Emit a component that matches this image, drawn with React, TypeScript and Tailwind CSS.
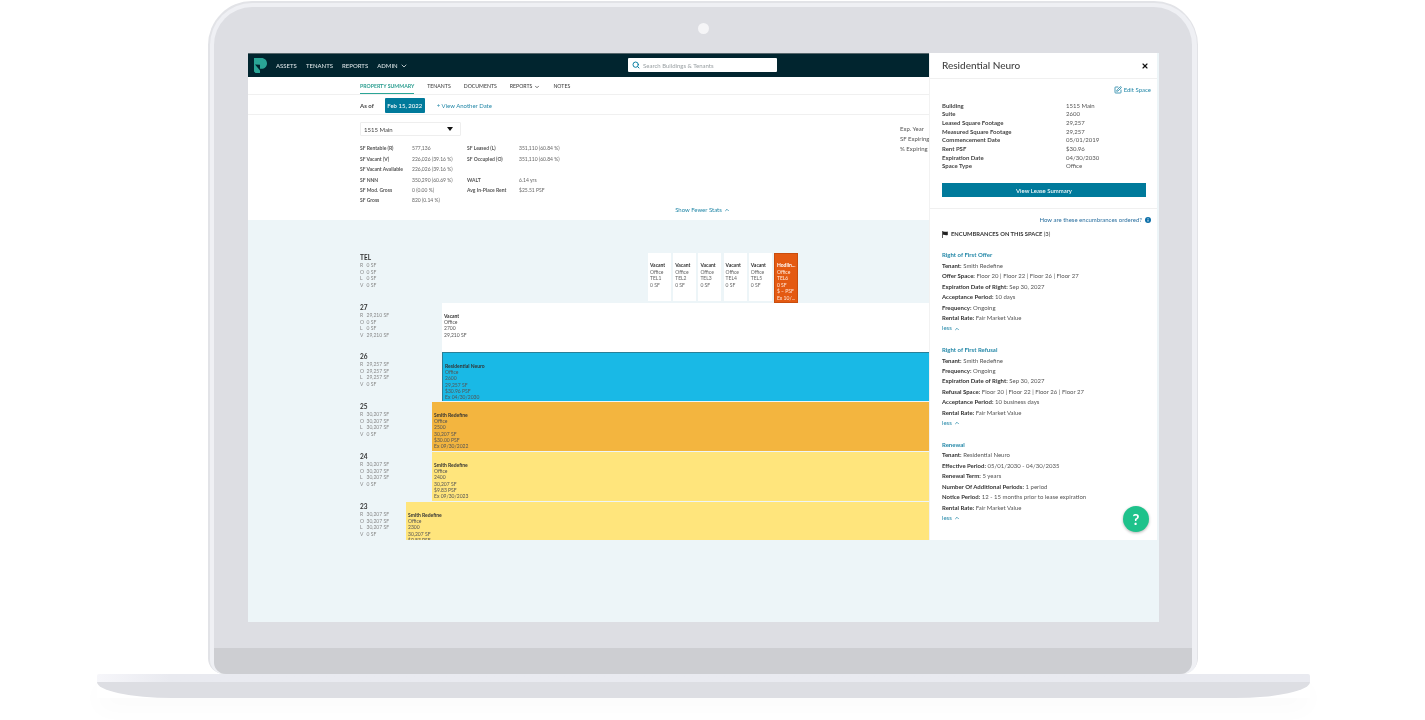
import React from "react";
import { ChevronDown, ChevronUp, Search, X, SquarePen } from "lucide-react";

const stats = [
  ["SF Rentable (R)", "577,136", "SF Leased (L)", "351,110 (60.84 %)"],
  ["SF Vacant (V)", "226,026 (39.16 %)", "SF Occupied (O)", "351,110 (60.84 %)"],
  ["SF Vacant Available", "226,026 (39.16 %)", "", ""],
  ["SF NNN", "350,290 (60.69 %)", "WALT", "6.14 yrs"],
  ["SF Mod. Gross", "0 (0.00 %)", "Avg In-Place Rent", "$25.51 PSF"],
  ["SF Gross", "820 (0.14 %)", "", ""],
];

const details = [
  ["Building", "1515 Main"],
  ["Suite", "2600"],
  ["Leased Square Footage", "29,257"],
  ["Measured Square Footage", "29,257"],
  ["Commencement Date", "05/01/2019"],
  ["Rent PSF", "$30.96"],
  ["Expiration Date", "04/30/2030"],
  ["Space Type", "Office"],
];

const encumbrances = [
  {
    title: "Right of First Offer",
    rows: [
      ["Tenant:", "Smith Redefine"],
      ["Offer Space:", "Floor 20 | Floor 22 | Floor 26 | Floor 27"],
      ["Expiration Date of Right:", "Sep 30, 2027"],
      ["Acceptance Period:", "10 days"],
      ["Frequency:", "Ongoing"],
      ["Rental Rate:", "Fair Market Value"],
    ],
  },
  {
    title: "Right of First Refusal",
    rows: [
      ["Tenant:", "Smith Redefine"],
      ["Frequency:", "Ongoing"],
      ["Expiration Date of Right:", "Sep 30, 2027"],
      ["Refusal Space:", "Floor 20 | Floor 22 | Floor 26 | Floor 27"],
      ["Acceptance Period:", "10 business days"],
      ["Rental Rate:", "Fair Market Value"],
    ],
  },
  {
    title: "Renewal",
    rows: [
      ["Tenant:", "Residential Neuro"],
      ["Effective Period:", "05/01/2030 - 04/30/2035"],
      ["Renewal Term:", "5 years"],
      ["Number Of Additional Periods:", "1 period"],
      ["Notice Period:", "12 - 15 months prior to lease expiration"],
      ["Rental Rate:", "Fair Market Value"],
    ],
  },
];

const telBoxes = ["TEL1", "TEL2", "TEL3", "TEL4", "TEL5"];

const floors = [
  {
    name: "27",
    sf: ["29,210 SF", "0 SF", "0 SF", "29,210 SF"],
    labelW: "w-[194px]",
    block: "bg-white",
    h: "h-[49px]",
    title: "Vacant",
    lines: ["Office", "2700", "29,210 SF"],
  },
  {
    name: "26",
    sf: ["29,257 SF", "29,257 SF", "29,257 SF", "0 SF"],
    labelW: "w-[194px]",
    block: "bg-[#19b9e6] border-t border-l border-[#2a7f97]",
    h: "h-[50px]",
    title: "Residential Neuro",
    lines: ["Office", "2600", "29,257 SF", "$30.96 PSF", "Ex 04/30/2030"],
  },
  {
    name: "25",
    sf: ["30,207 SF", "30,207 SF", "30,207 SF", "0 SF"],
    labelW: "w-[184px]",
    block: "bg-[#f3b53f]",
    h: "h-[50px]",
    title: "Smith Redefine",
    lines: ["Office", "2500", "30,207 SF", "$30.00 PSF", "Ex 09/30/2022"],
  },
  {
    name: "24",
    sf: ["30,207 SF", "30,207 SF", "30,207 SF", "0 SF"],
    labelW: "w-[184px]",
    block: "bg-[#ffe57c]",
    h: "h-[50px]",
    title: "Smith Redefine",
    lines: ["Office", "2400", "30,207 SF", "$9.83 PSF", "Ex 09/30/2023"],
  },
  {
    name: "23",
    sf: ["30,207 SF", "30,207 SF", "30,207 SF", "0 SF"],
    labelW: "w-[158px]",
    block: "bg-[#ffe57c]",
    h: "h-[50px]",
    title: "Smith Redefine",
    lines: ["Office", "2300", "30,207 SF", "$9.83 PSF"],
  },
];

const Logo = () => (
  <svg width="13" height="15" viewBox="0 0 13 15">
    <path d="M0 0H7.5C10.6 0 13 2.4 13 5.4C13 8.4 10.6 10.8 7.5 10.8H6V15H1.5L0 13.5Z" fill="#2aa596" />
    <path d="M1 6.5L6 6.8V12.6Z" fill="#01252f" />
  </svg>
);

const FlagIcon = () => (
  <svg width="6" height="7" viewBox="0 0 6 7">
    <path d="M0.4 0V7" stroke="#222" strokeWidth="0.8" />
    <path d="M0.8 0.6C2.2 0 3.2 1.2 5.8 0.6V4C3.2 4.6 2.2 3.4 0.8 4Z" fill="#222" />
  </svg>
);

const InfoDot = () => (
  <svg width="6" height="6" viewBox="0 0 6 6">
    <circle cx="3" cy="3" r="3" fill="#0a6ea8" />
    <path d="M3 2.6V4.6M3 1.2V1.9" stroke="#fff" strokeWidth="0.9" />
  </svg>
);

const FloorLabel = ({ name, sf }: { name: string; sf: string[] }) => (
  <div className="pl-[112px]">
    <div className="text-[6.5px] leading-[7px] font-bold text-[#333] pt-[1px]">{name}</div>
    <div className="mt-[1px] text-[5px] leading-[6.7px] text-[#888]">
      {["R", "O", "L", "V"].map((k, i) => (
        <div key={k} className="flex">
          <span className="w-[6.5px]">{k}</span>
          <span>{sf[i]}</span>
        </div>
      ))}
    </div>
  </div>
);

function MainColumn() {
  return (
    <div className="w-[681px] flex flex-col">
      {/* top nav */}
      <div className="h-[24px] shrink-0 bg-[#01252f] border-t border-[#55666c] flex items-center pl-[6px] relative">
        <Logo />
        <div className="ml-[9px] flex items-center gap-[9px] text-[6px] font-medium text-[#d8e0e3]">
          <span>ASSETS</span>
          <span>TENANTS</span>
          <span>REPORTS</span>
          <span className="flex items-center gap-[2px]">
            ADMIN <ChevronDown size={8} strokeWidth={2.5} />
          </span>
        </div>
        <div className="absolute left-[380px] top-[4px] w-[149px] h-[14px] bg-white flex items-center pl-[4px] gap-[3px] rounded-[1px]">
          <Search size={8} strokeWidth={3} className="text-[#0a7fa3]" />
          <span className="text-[6px] text-[#9aa0a3]">Search Buildings &amp; Tenants</span>
        </div>
      </div>

      {/* tabs */}
      <div className="h-[18px] shrink-0 bg-white border-b border-[#f0f0f0] pl-[112px] flex items-stretch gap-[13px] text-[5.2px] font-medium text-[#444]">
        <span className="flex items-center pt-[3px] border-b border-[#2aa596] text-[#2a9d8f] font-bold">PROPERTY SUMMARY</span>
        <span className="flex items-center pt-[3px]">TENANTS</span>
        <span className="flex items-center pt-[3px]">DOCUMENTS</span>
        <span className="flex items-center pt-[3px] gap-[2px]">
          REPORTS <ChevronDown size={6} strokeWidth={3} />
        </span>
        <span className="flex items-center pt-[3px]">NOTES</span>
      </div>

      {/* as of */}
      <div className="h-[20px] shrink-0 bg-white border-b border-[#f0f0f0] pl-[112px] pt-[1px] flex items-center text-[6px]">
        <span className="font-bold text-[#444]">As of</span>
        <span className="ml-[11px] h-[15px] w-[40px] flex items-center justify-center bg-[#007a9b] rounded-[1px] text-white font-medium">
          Feb 15, 2022
        </span>
        <span className="ml-[12px] text-[#2488a8]">+ View Another Date</span>
      </div>

      {/* stats */}
      <div className="h-[105px] shrink-0 bg-white flex flex-col">
        <div className="h-[90px] flex justify-between pl-[112px] pt-[7px] overflow-hidden">
          <div>
            <div className="w-[101px] h-[14px] bg-white border border-[#eeeeee] rounded-[1px] flex items-center justify-between px-[3px]">
              <span className="text-[6px] text-[#444]">1515 Main</span>
              <svg width="6" height="4" viewBox="0 0 6 4" className="mr-[4px]">
                <path d="M0 0H6L3 4Z" fill="#111" />
              </svg>
            </div>
            <div className="mt-[8px] grid grid-cols-[52px_55px_52px_60px] auto-rows-[10.4px] items-center text-[5px] text-[#666]">
              {stats.map((r) =>
                r.map((c, i) => (
                  <span key={r[0] + i} className={i % 2 === 0 ? "font-bold text-[#555] whitespace-nowrap" : "whitespace-nowrap"}>
                    {c}
                  </span>
                ))
              )}
            </div>
          </div>
          <div className="w-[29px] pt-[2px] text-[6px] leading-[10.2px] text-[#555] whitespace-nowrap overflow-hidden">
            <div>Exp. Year</div>
            <div>SF Expiring</div>
            <div>% Expiring</div>
          </div>
        </div>
        <div className="h-[15px] flex items-start justify-center pl-[228px] text-[6px] text-[#2488a8]">
          <span className="flex items-center gap-[2px]">
            Show Fewer Stats <ChevronUp size={6} strokeWidth={3} />
          </span>
        </div>
      </div>

      {/* stacking plan */}
      <div className="flex-1 overflow-hidden bg-[#edf5f8]">
        <div className="h-[83px] flex">
          <div className="w-[400px] pt-[33px]">
            <FloorLabel name="TEL" sf={["0 SF", "0 SF", "0 SF", "0 SF"]} />
          </div>
          <div className="pt-[33px] flex gap-[2.2px]">
            {telBoxes.map((t) => (
              <div key={t} className="w-[23px] h-[48px] bg-white pl-[2px] pt-[9px] text-[5px] leading-[6.6px] text-[#666]">
                <div className="font-bold text-[#333]">Vacant</div>
                <div>Office</div>
                <div>{t}</div>
                <div>0 SF</div>
              </div>
            ))}
            <div className="w-[24px] h-[50px] bg-[#e45a12] border border-[#c94d0d] pl-[2px] pt-[8px] text-[5px] leading-[6.6px] text-[#ffe9dc] overflow-hidden">
              <div className="font-bold text-white">Hodlin...</div>
              <div>Office</div>
              <div>TEL6</div>
              <div>0 SF</div>
              <div>$ – PSF</div>
              <div>Ex 10/...</div>
            </div>
          </div>
        </div>
        {floors.map((f) => (
          <div key={f.name} className={`${f.h} flex`}>
            <div className={`${f.labelW} shrink-0`}>
              <FloorLabel name={f.name} sf={f.sf} />
            </div>
            <div className={`flex-1 h-[49px] ${f.block} pl-[2px] pt-[10px] text-[5px] leading-[6.2px] text-[#555]`}>
              <div className="font-bold text-[#333]">{f.title}</div>
              {f.lines.map((l) => (
                <div key={l}>{l}</div>
              ))}
            </div>
          </div>
        ))}
      </div>
    </div>
  );
}

function SidePanel() {
  return (
    <div className="w-[228px] bg-white relative text-[6px] text-[#555] overflow-hidden border-l border-[#f2f2f2]">
      <div className="h-[26px] border-b border-[#f0f0f0] flex items-center justify-between pl-[12px] pr-[8px]">
        <span className="text-[10px] font-medium text-[#444]">Residential Neuro</span>
        <X size={8} strokeWidth={3.5} className="text-[#111]" />
      </div>
      <div className="pr-[6px] h-[20px] pt-[1px] flex items-center justify-end gap-[2px] text-[#2488a8]">
        <SquarePen size={8} strokeWidth={2.5} />
        <span>Edit Space</span>
      </div>
      <div className="pl-[12px] mt-[2px] grid grid-cols-[124px_1fr] auto-rows-[8.66px] items-center">
        {details.map(([k, v]) => (
          <React.Fragment key={k}>
            <span className="font-bold text-[#444]">{k}</span>
            <span>{v}</span>
          </React.Fragment>
        ))}
      </div>
      <div className="mx-[12px] mt-[13px] w-[204px] h-[14px] bg-[#007a9b] text-white font-medium flex items-center justify-center">
        View Lease Summary
      </div>
      <div className="mt-[11px] border-t border-[#f0f0f0] h-[22px] pr-[6px] flex items-center justify-end gap-[3px] text-[#2a6f9f]">
        How are these encumbrances ordered?
        <InfoDot />
      </div>
      <div className="pl-[12px] flex items-center gap-[3px] h-[9px] font-bold text-[#333] text-[5.8px]">
        <FlagIcon />
        <span>
          ENCUMBRANCES ON THIS SPACE <span className="font-normal">(3)</span>
        </span>
      </div>
      <div className="pl-[12px] mt-[11px] flex flex-col gap-[11.2px]">
        {encumbrances.map((e) => (
          <div key={e.title} className="leading-[10.45px]">
            <div className="font-bold text-[#2488a8]">{e.title}</div>
            {e.rows.map(([k, v]) => (
              <div key={k}>
                <span className="font-bold text-[#333]">{k}</span> {v}
              </div>
            ))}
            <div className="flex items-center gap-[2px] text-[#2488a8]">
              less <ChevronUp size={6} strokeWidth={3} />
            </div>
          </div>
        ))}
      </div>
      <div className="absolute left-[193px] top-[453px] w-[26px] h-[26px] rounded-full bg-[#1ec28b] shadow-[0_1px_3px_rgba(0,0,0,0.3)] flex items-center justify-center text-white text-[15px] font-bold">
        ?
      </div>
    </div>
  );
}

export default function App() {
  return (
    <div className="w-[1425px] h-[720px] overflow-hidden bg-white font-['Lato',sans-serif]">
      {/* laptop lid */}
      <div className="ml-[208px] mt-[1px] w-[990px] h-[673px] rounded-t-[44px] rounded-b-[16px] bg-[#e2e3e7] p-[1.5px] pb-0">
        <div className="h-full rounded-t-[42px] rounded-b-[14px] bg-[#eff0f4] p-[4.5px] pb-0">
          <div className="h-full rounded-t-[38px] rounded-b-[12px] bg-[#dddee3] overflow-hidden flex flex-col">
            <div className="h-[46px] shrink-0 flex items-center justify-center pb-[3px]">
              <div className="w-[11px] h-[11px] rounded-full bg-[#f5f5f7] blur-[0.5px]" />
            </div>
            <div className="ml-[34px] w-[911px] h-[569px] shrink-0 bg-[#edf5f8] blur-[0.25px]">
              <div className="flex h-[487px] w-[909px] overflow-hidden">
                <MainColumn />
                <SidePanel />
              </div>
            </div>
            <div className="h-[26px] shrink-0" />
            <div className="flex-1 bg-[#cdced2]" />
          </div>
        </div>
      </div>
      {/* laptop base */}
      <div className="ml-[97px] w-[1213px] shadow-[0_12px_24px_rgba(0,0,0,0.02)]">
        <div className="h-[8px] rounded-tl-[2px] rounded-tr-[2px] bg-gradient-to-r from-[#f6f6fa] via-[#e9eaf0] via-[6%] to-[#e9eaf0]" />
        <div className="h-[16px] bg-[#dddee3] [border-bottom-left-radius:75px_16px] [border-bottom-right-radius:75px_16px]" />
      </div>
    </div>
  );
}
